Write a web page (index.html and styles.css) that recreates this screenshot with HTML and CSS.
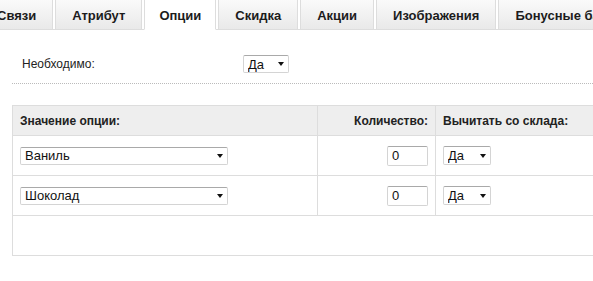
FILE: index.html
```html
<!DOCTYPE html>
<html lang="ru">
<head>
    <meta charset="UTF-8">
    <meta name="viewport" content="width=device-width, initial-scale=1.0">
    <title>Опции товара</title>
    <link rel="stylesheet" href="styles.css">
</head>
<body>
    <div class="tabs">
        <div class="tab">Связи</div>
        <div class="tab">Атрибут</div>
        <div class="tab active">Опции</div>
        <div class="tab">Скидка</div>
        <div class="tab">Акции</div>
        <div class="tab">Изображения</div>
        <div class="tab">Бонусные баллы</div>
    </div>

    <div class="content">
        <div class="field-row">
            <label class="field-label">Необходимо:</label>
            <span class="select select-required">
                <select>
                    <option>Да</option>
                    <option>Нет</option>
                </select>
            </span>
        </div>

        <table class="options-table">
            <colgroup>
                <col class="col-value">
                <col class="col-qty">
                <col class="col-subtract">
            </colgroup>
            <thead>
                <tr>
                    <th>Значение опции:</th>
                    <th class="qty">Количество:</th>
                    <th>Вычитать со склада:</th>
                </tr>
            </thead>
            <tbody>
                <tr>
                    <td>
                        <span class="select select-value">
                            <select><option>Ваниль</option></select>
                        </span>
                    </td>
                    <td class="qty"><input type="text" class="qty-input" value="0"></td>
                    <td>
                        <span class="select select-subtract">
                            <select><option>Да</option><option>Нет</option></select>
                        </span>
                    </td>
                </tr>
                <tr>
                    <td>
                        <span class="select select-value">
                            <select><option>Шоколад</option></select>
                        </span>
                    </td>
                    <td class="qty"><input type="text" class="qty-input" value="0"></td>
                    <td>
                        <span class="select select-subtract">
                            <select><option>Да</option><option>Нет</option></select>
                        </span>
                    </td>
                </tr>
                <tr class="empty-row">
                    <td colspan="3"></td>
                </tr>
            </tbody>
        </table>
    </div>
</body>
</html>
```

FILE: styles.css
```css
html,
body {
    overflow: hidden;
}

body {
    margin: 0;
    font-family: "Liberation Sans", Arial, sans-serif;
    font-size: 12px;
    color: #222;
    background: #fff;
}

/* tabs */
.tabs {
    display: flex;
    margin-left: -20px;
    border-bottom: 1px solid #ddd;
    white-space: nowrap;
}

.tab {
    flex-shrink: 0;
    height: 26px;
    line-height: 26px;
    padding: 3px 16px 0;
    margin-right: 2px;
    margin-bottom: -1px;
    border: 1px solid #ddd;
    border-top: none;
    background: linear-gradient(#fafafa, #e9e9e9);
    font-size: 13px;
    font-weight: bold;
    color: #1c1c1c;
}

.tab.active {
    padding: 3px 14px 0;
    background: #fff;
    border-bottom-color: #fff;
}

/* content */
.content {
    padding-left: 12px;
}

.field-row {
    display: flex;
    align-items: center;
    padding: 25px 10px 10px;
    border-bottom: 1px dotted #bbb;
}

.field-label {
    width: 221px;
}

/* selects */
.select {
    position: relative;
    display: inline-block;
    vertical-align: middle;
}

.select select {
    display: block;
    appearance: none;
    -webkit-appearance: none;
    margin: 0;
    padding: 0 0 0 4px;
    border: 1px solid #d4d4d4;
    border-top-color: #a9a9a9;
    border-radius: 2px;
    background: #fff;
    font-family: "Liberation Sans", Arial, sans-serif;
    font-size: 13px;
    color: #111;
    box-sizing: border-box;
}

.select::after {
    content: "";
    position: absolute;
    right: 5px;
    top: 50%;
    margin-top: -2px;
    border-left: 3.5px solid transparent;
    border-right: 3.5px solid transparent;
    border-top: 4px solid #111;
}

.select-required select {
    width: 46px;
    height: 18px;
}

.select-value select {
    width: 208px;
    height: 18px;
}

.select-subtract select {
    width: 48px;
    height: 19px;
}

.qty-input {
    width: 41px;
    height: 20px;
    margin: 0;
    padding: 0 0 0 4px;
    border: 1px solid #d4d4d4;
    border-top-color: #a9a9a9;
    border-radius: 2px;
    font-family: "Liberation Sans", Arial, sans-serif;
    font-size: 13px;
    color: #111;
    box-sizing: border-box;
    vertical-align: middle;
}

/* table */
.options-table {
    margin-top: 21px;
    width: 640px;
    table-layout: fixed;
    border-collapse: collapse;
}

.col-value {
    width: 305px;
}

.col-qty {
    width: 118px;
}

.col-subtract {
    width: 217px;
}

.options-table th,
.options-table td {
    border: 1px solid #ddd;
    padding: 0 7px;
    text-align: left;
}

.options-table th {
    height: 29px;
    background: #eee;
    font-weight: bold;
}

.options-table td {
    height: 39px;
}

.options-table .qty {
    text-align: right;
}
```
